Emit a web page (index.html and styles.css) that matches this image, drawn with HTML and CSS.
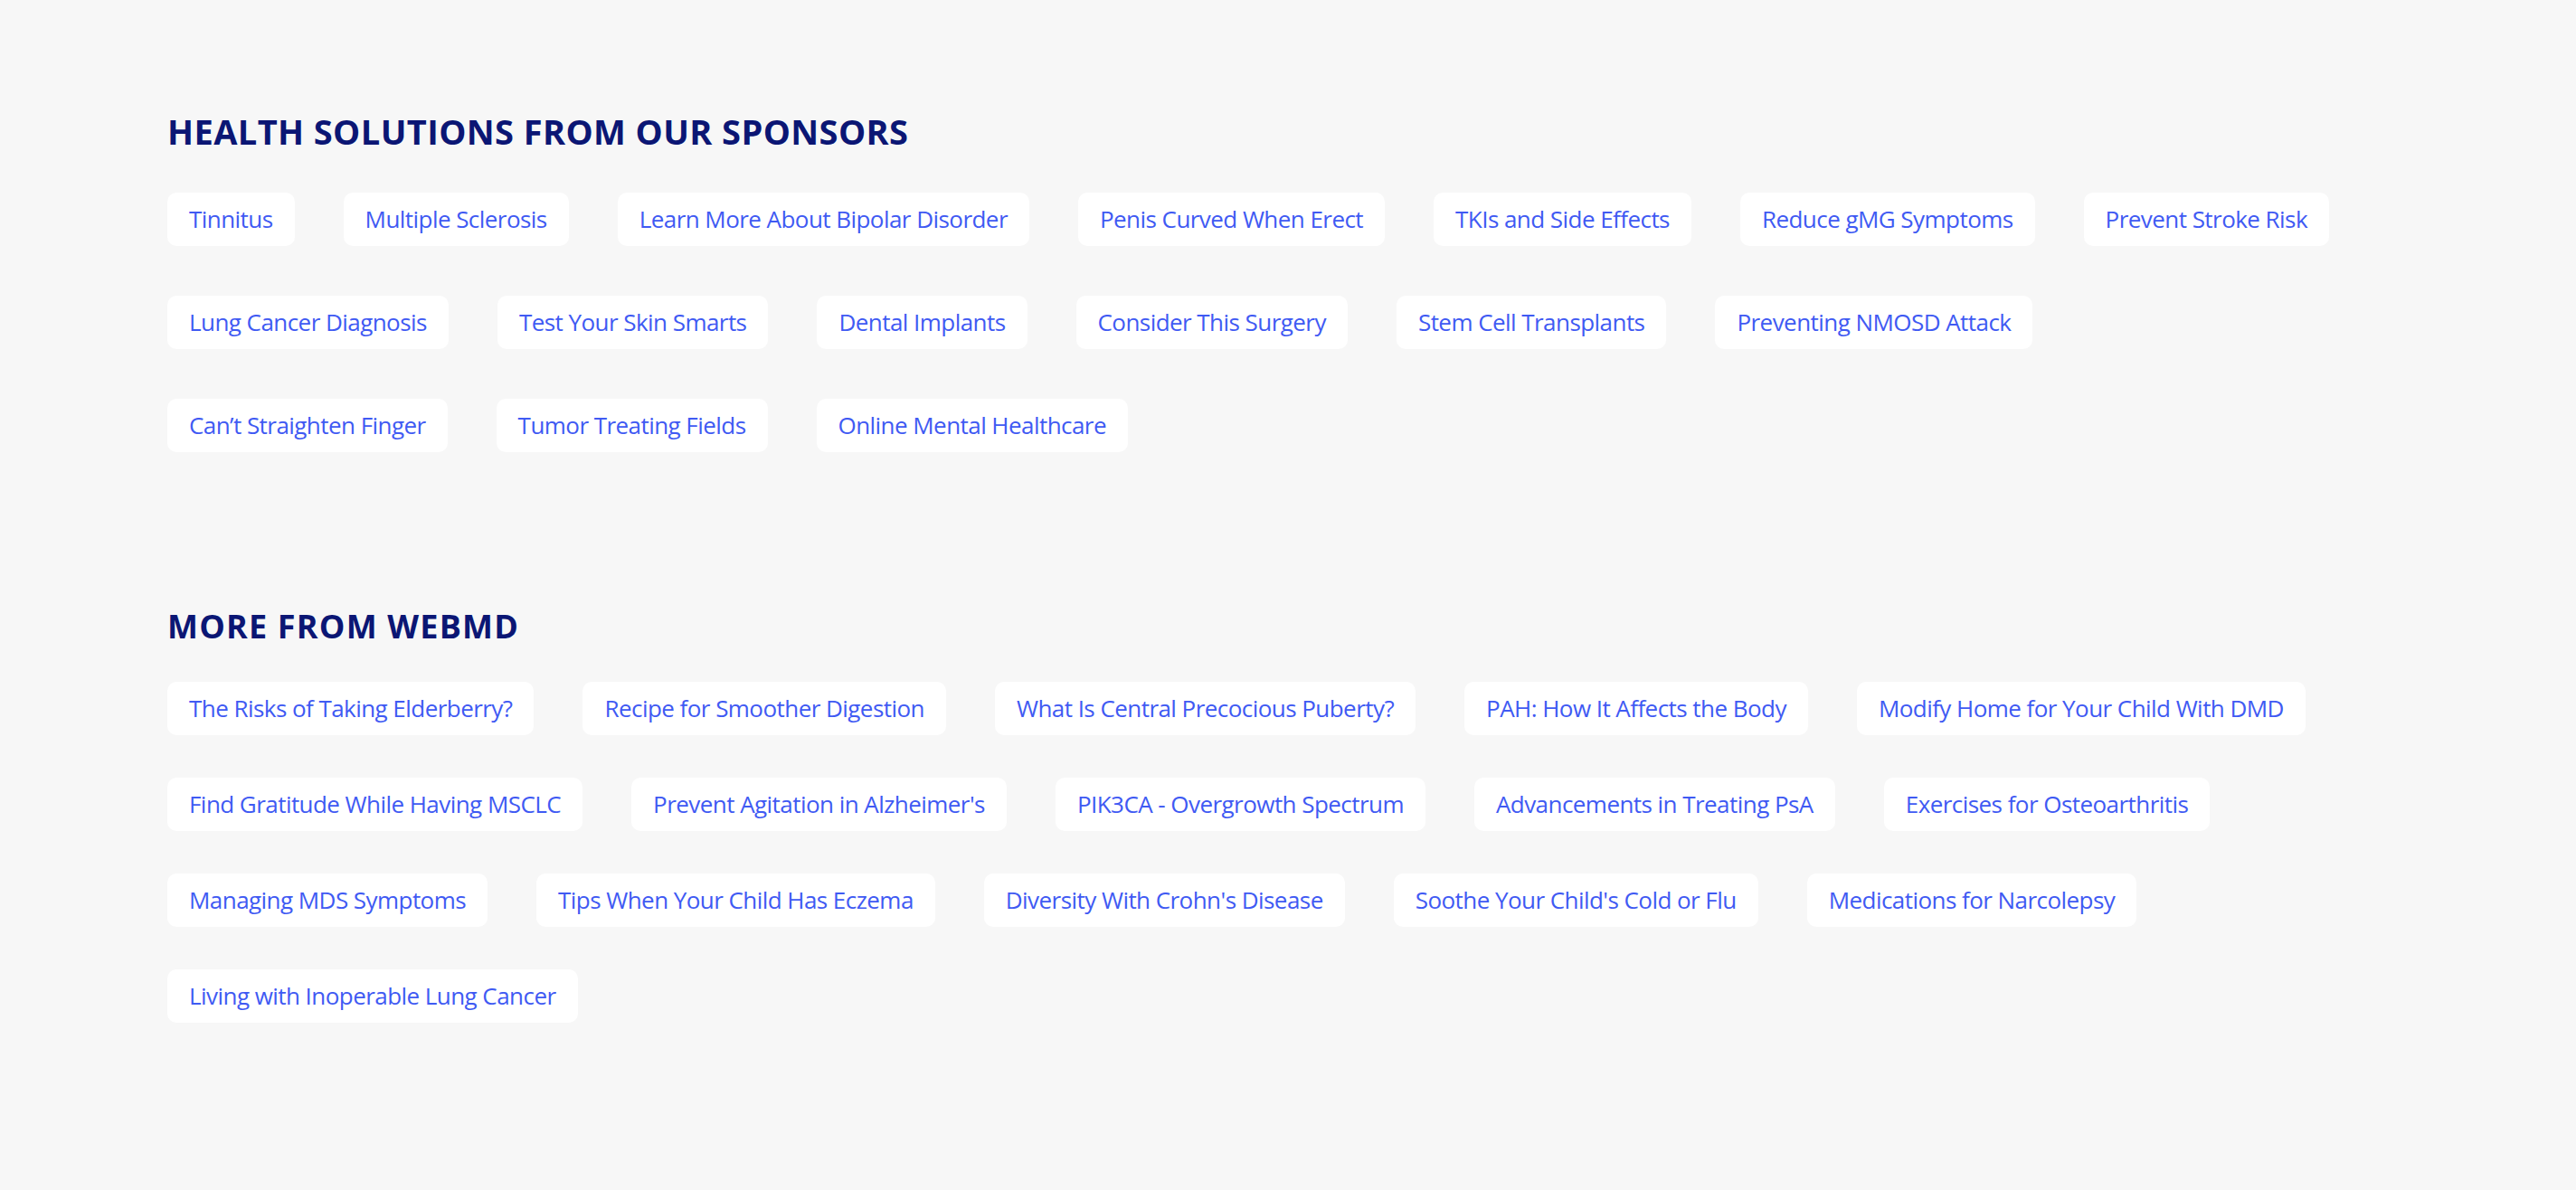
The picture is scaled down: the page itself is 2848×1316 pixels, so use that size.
FILE: index.html
```html
<!DOCTYPE html>
<html lang="en">
<head>
<meta charset="utf-8">
<title>Health Solutions</title>
<link rel="stylesheet" href="styles.css">
</head>
<body>
<main class="page">
  <section class="block block-sponsors">
    <h2 class="block-title title-lg">HEALTH SOLUTIONS FROM OUR SPONSORS</h2>
    <ul class="pill-list">
      <li class="pill"><a href="#">Tinnitus</a></li>
      <li class="pill"><a href="#">Multiple Sclerosis</a></li>
      <li class="pill"><a href="#">Learn More About Bipolar Disorder</a></li>
      <li class="pill"><a href="#">Penis Curved When Erect</a></li>
      <li class="pill"><a href="#">TKIs and Side Effects</a></li>
      <li class="pill"><a href="#">Reduce gMG Symptoms</a></li>
      <li class="pill"><a href="#">Prevent Stroke Risk</a></li>
      <li class="pill"><a href="#">Lung Cancer Diagnosis</a></li>
      <li class="pill"><a href="#">Test Your Skin Smarts</a></li>
      <li class="pill"><a href="#">Dental Implants</a></li>
      <li class="pill"><a href="#">Consider This Surgery</a></li>
      <li class="pill"><a href="#">Stem Cell Transplants</a></li>
      <li class="pill"><a href="#">Preventing NMOSD Attack</a></li>
      <li class="pill"><a href="#">Can’t Straighten Finger</a></li>
      <li class="pill"><a href="#">Tumor Treating Fields</a></li>
      <li class="pill"><a href="#">Online Mental Healthcare</a></li>
    </ul>
  </section>
  <section class="block block-more">
    <h2 class="block-title title-md">MORE FROM WEBMD</h2>
    <ul class="pill-list">
      <li class="pill"><a href="#">The Risks of Taking Elderberry?</a></li>
      <li class="pill"><a href="#">Recipe for Smoother Digestion</a></li>
      <li class="pill"><a href="#">What Is Central Precocious Puberty?</a></li>
      <li class="pill"><a href="#">PAH: How It Affects the Body</a></li>
      <li class="pill"><a href="#">Modify Home for Your Child With DMD</a></li>
      <li class="pill"><a href="#">Find Gratitude While Having MSCLC</a></li>
      <li class="pill"><a href="#">Prevent Agitation in Alzheimer's</a></li>
      <li class="pill"><a href="#">PIK3CA - Overgrowth Spectrum</a></li>
      <li class="pill"><a href="#">Advancements in Treating PsA</a></li>
      <li class="pill"><a href="#">Exercises for Osteoarthritis</a></li>
      <li class="pill"><a href="#">Managing MDS Symptoms</a></li>
      <li class="pill"><a href="#">Tips When Your Child Has Eczema</a></li>
      <li class="pill"><a href="#">Diversity With Crohn's Disease</a></li>
      <li class="pill"><a href="#">Soothe Your Child's Cold or Flu</a></li>
      <li class="pill"><a href="#">Medications for Narcolepsy</a></li>
      <li class="pill"><a href="#">Living with Inoperable Lung Cancer</a></li>
    </ul>
  </section>
</main>
</body>
</html>
```

FILE: styles.css
```css
html, body {
  margin: 0;
  padding: 0;
  background: #f7f7f7;
}

body {
  font-family: "Open Sans", "Noto Sans", "Liberation Sans", sans-serif;
  -webkit-font-smoothing: antialiased;
}

.page {
  padding: 126px 185px 120px;
  display: flex;
  flex-direction: column;
}

.block-title {
  margin: 0;
  color: #0b1674;
  font-weight: 700;
}

.title-lg {
  font-size: 38px;
  line-height: 38px;
  letter-spacing: 0.4px;
  margin-bottom: 49px;
}

.title-md {
  font-size: 36px;
  line-height: 36px;
  letter-spacing: 1.2px;
  margin-bottom: 43px;
}

.block-more {
  margin-top: 120px;
}

.pill-list {
  list-style: none;
  margin: 0;
  padding: 0;
  display: flex;
  flex-wrap: wrap;
  align-items: flex-start;
}

.pill {
  background: #ffffff;
  border-radius: 10px;
  padding: 12px 24px;
  margin: 0 54px 55px 0;
  font-size: 26px;
  line-height: 35px;
  letter-spacing: -0.55px;
  white-space: nowrap;
}

.block-more .pill {
  margin-bottom: 47px;
}

.pill a {
  color: #3f5af3;
  text-decoration: none;
}
```
